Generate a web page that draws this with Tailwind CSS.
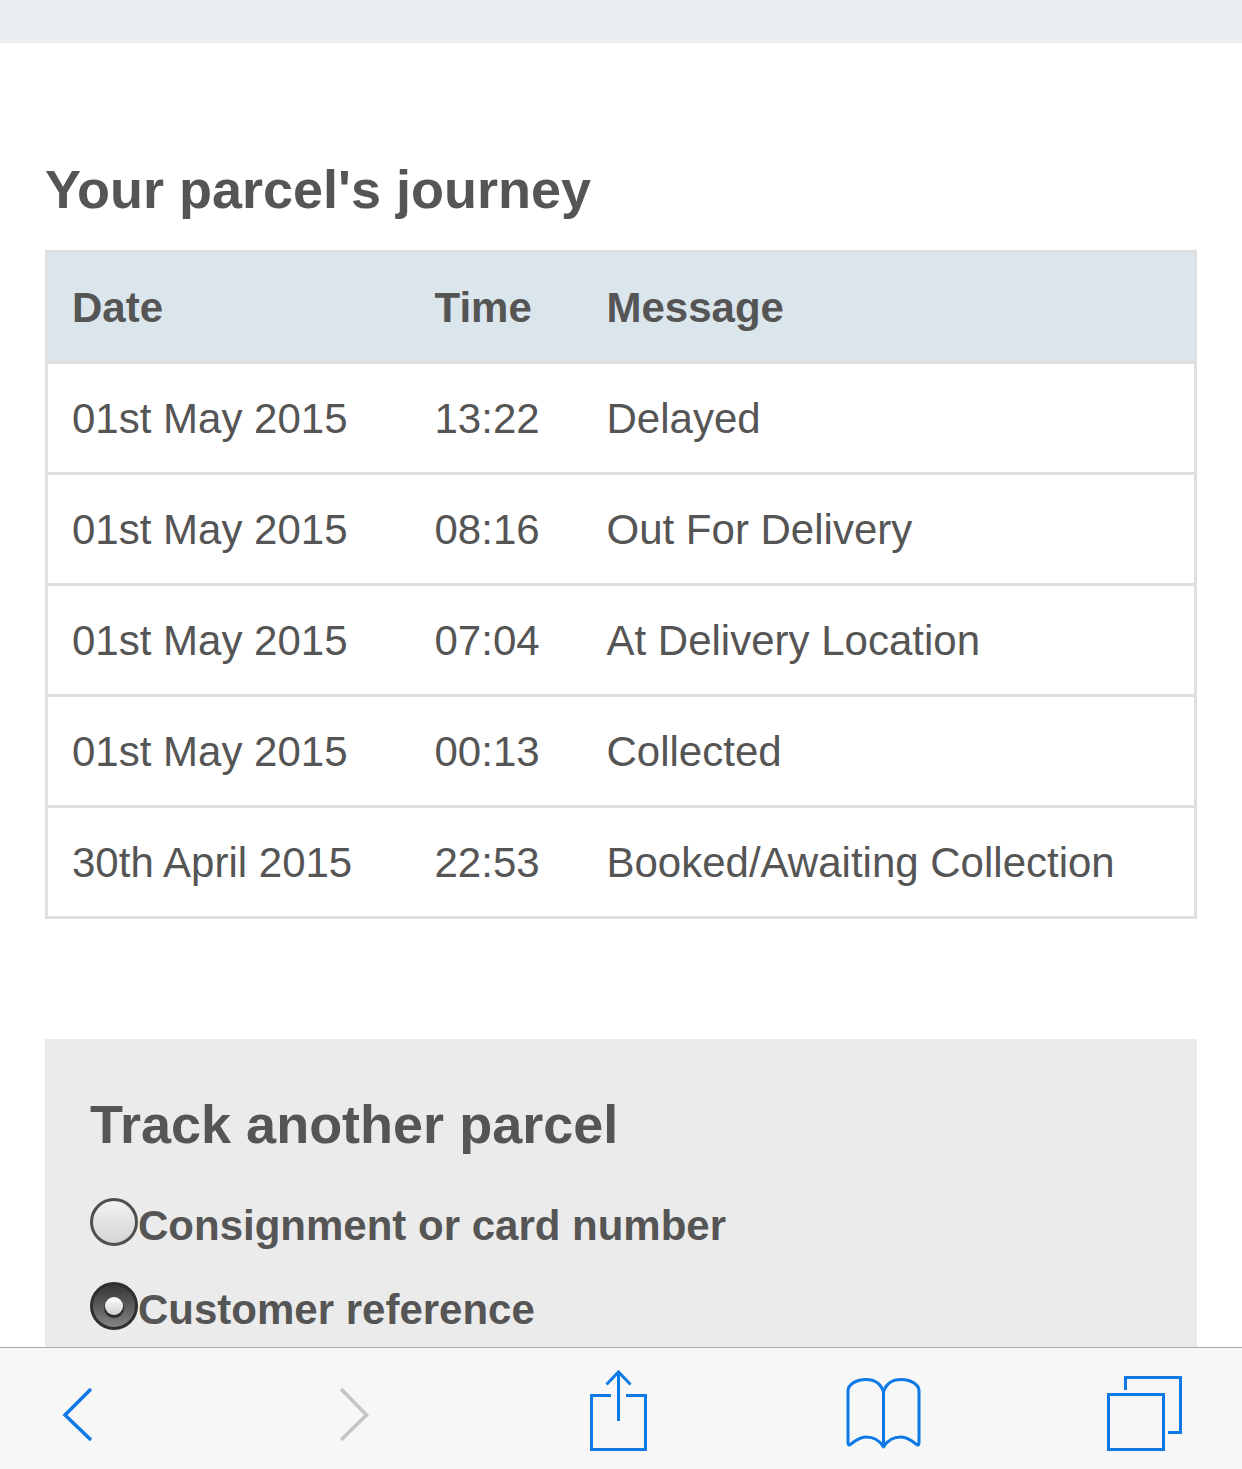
<!DOCTYPE html>
<html lang="en">
<head>
    <meta charset="UTF-8">
    <meta name="viewport" content="width=device-width, initial-scale=1.0">
    <script src="https://cdn.jsdelivr.net/npm/@tailwindcss/browser@4"></script>
    <title>Your parcel's journey</title>
</head>
<body class="bg-white">
    <div class="relative w-[1242px] h-[1469px] overflow-hidden font-['Liberation_Sans',Arial,sans-serif] text-[#555555]">
        <div class="h-[43px] bg-[#e9eff2]"></div>

        <div class="px-[45px]">
            <h2 class="mt-[113px] h-[66px] text-[54px] leading-[66px] font-bold">Your parcel's journey</h2>
            <table class="mt-[28px] w-[1152px] table-fixed border-collapse text-[42px]">
                <thead>
                    <tr class="h-[111px] bg-[#dbe5ec] text-left font-bold">
                        <th class="w-[388px] border-[3px] border-r-0 border-[#dfdfdf] pl-[24px]">Date</th>
                        <th class="w-[172px] border-y-[3px] border-[#dfdfdf]">Time</th>
                        <th class="border-[3px] border-l-0 border-[#dfdfdf]">Message</th>
                    </tr>
                </thead>
                <tbody>
                    <tr class="h-[111px]">
                        <td class="border-[3px] border-r-0 border-[#dfdfdf] pl-[24px]">01st May 2015</td>
                        <td class="border-y-[3px] border-[#dfdfdf]">13:22</td>
                        <td class="border-[3px] border-l-0 border-[#dfdfdf]">Delayed</td>
                    </tr>
                    <tr class="h-[111px]">
                        <td class="border-[3px] border-r-0 border-[#dfdfdf] pl-[24px]">01st May 2015</td>
                        <td class="border-y-[3px] border-[#dfdfdf]">08:16</td>
                        <td class="border-[3px] border-l-0 border-[#dfdfdf]">Out For Delivery</td>
                    </tr>
                    <tr class="h-[111px]">
                        <td class="border-[3px] border-r-0 border-[#dfdfdf] pl-[24px]">01st May 2015</td>
                        <td class="border-y-[3px] border-[#dfdfdf]">07:04</td>
                        <td class="border-[3px] border-l-0 border-[#dfdfdf]">At Delivery Location</td>
                    </tr>
                    <tr class="h-[111px]">
                        <td class="border-[3px] border-r-0 border-[#dfdfdf] pl-[24px]">01st May 2015</td>
                        <td class="border-y-[3px] border-[#dfdfdf]">00:13</td>
                        <td class="border-[3px] border-l-0 border-[#dfdfdf]">Collected</td>
                    </tr>
                    <tr class="h-[111px]">
                        <td class="border-[3px] border-r-0 border-[#dfdfdf] pl-[24px]">30th April 2015</td>
                        <td class="border-y-[3px] border-[#dfdfdf]">22:53</td>
                        <td class="border-[3px] border-l-0 border-[#dfdfdf]">Booked/Awaiting Collection</td>
                    </tr>
                </tbody>
            </table>

            <section class="mt-[120px] h-[500px] bg-[#ebebeb] pl-[45px] pt-[52px]">
                <h2 class="h-[66px] text-[54px] leading-[66px] font-bold">Track another parcel</h2>
                <div class="mt-[41px] flex h-[48px] items-center text-[42px] font-bold">
                    <span class="h-[48px] w-[48px] rounded-full border-[3px] border-[#4f4f4f] bg-gradient-to-b from-[#f2f2f2] to-[#d4d4d4]"></span>
                    <span class="mt-[6px]">Consignment or card number</span>
                </div>
                <div class="mt-[36px] flex h-[48px] items-center text-[42px] font-bold">
                    <span class="flex h-[48px] w-[48px] items-center justify-center rounded-full border-[3px] border-[#2f2f2f] bg-gradient-to-b from-[#363636] to-[#858585]">
                        <span class="h-[18px] w-[18px] rounded-full bg-gradient-to-b from-[#ffffff] to-[#cfcfcf] shadow-[0_2px_1px_1px_#2a2a2a]"></span>
                    </span>
                    <span class="mt-[6px]">Customer reference</span>
                </div>
            </section>
        </div>

        <!-- safari toolbar -->
        <div class="absolute bottom-0 left-0 h-[122px] w-full border-t border-[#aaaaaa] bg-[#f7f7f7]">
            <svg class="block" width="1242" height="121" viewBox="0 1348 1242 121" fill="none" stroke="#0f7ae5" stroke-width="3">
                <!-- back / forward -->
                <path d="M91 1389 L65 1415 L91 1440" stroke-width="3.5"/>
                <path d="M341 1389 L366.5 1415 L341 1440" stroke="#c4c4c4" stroke-width="3.5"/>
                <!-- share -->
                <path d="M611 1395.5 H591.5 V1449.5 H645.5 V1395.5 H626"/>
                <path d="M618.5 1421 V1372 M606.5 1384.5 L618.5 1372 L630.5 1384.5"/>
                <!-- bookmarks -->
                <path stroke-linejoin="round" d="M883.5 1392 C881 1384 875 1379.5 866 1379.5 C857 1379.5 848 1384 848 1391 V1443 Q848 1446.5 851 1444 C856 1440 861 1437 866 1437 C874 1437 880 1441 883.5 1447 C887 1441 893 1437 901 1437 C906 1437 911 1440 916 1444 Q919 1446.5 919 1443 V1391 C919 1384 910 1379.5 901 1379.5 C892 1379.5 886 1384 883.5 1392 V1447"/>
                <!-- tabs -->
                <path d="M1108.5 1394.5 H1163.5 V1449.5 H1108.5 Z"/>
                <path d="M1125.5 1390 V1377.5 H1180.5 V1432.5 H1168"/>
            </svg>
        </div>
    </div>
</body>
</html>
